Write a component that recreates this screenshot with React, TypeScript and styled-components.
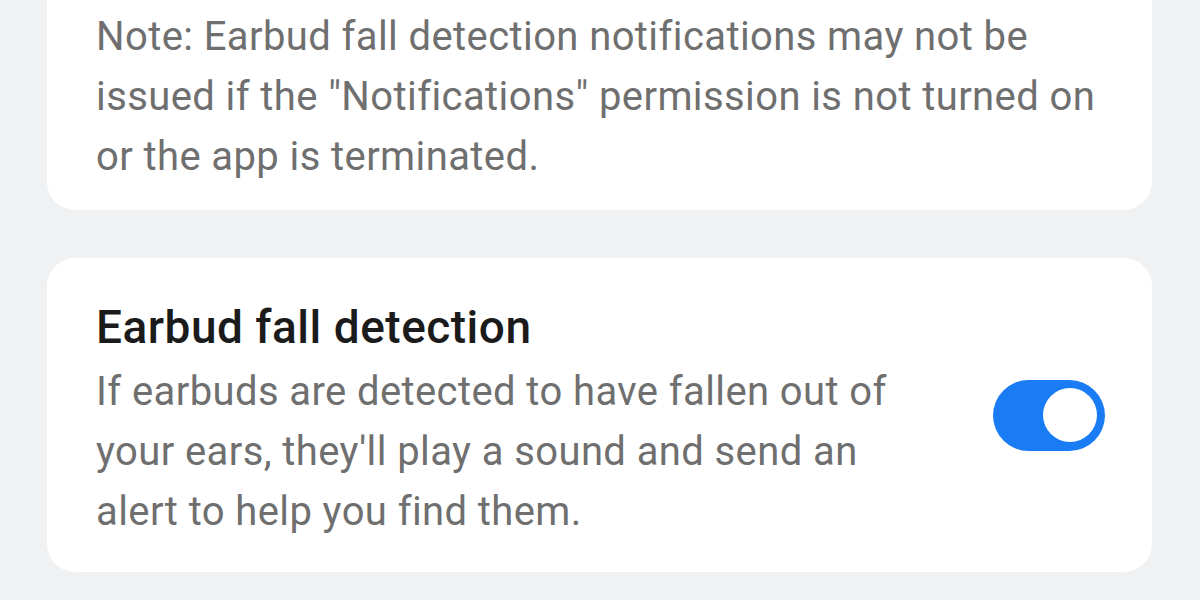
import styled, { createGlobalStyle } from "styled-components";

const GlobalStyle = createGlobalStyle`
  body {
    margin: 0;
    background-color: #f0f1f3;
    font-family: Roboto, "Noto Sans", sans-serif;
    overflow: hidden;
  }
`;

const Page = styled.div`
  display: flex;
  flex-direction: column;
  gap: 48px;
  padding: 0 48px 0 47px;
  height: 600px;
  box-sizing: border-box;
`;

const Card = styled.div<{ $first?: boolean }>`
  background-color: #ffffff;
  border-radius: 28px;
  margin-top: ${(p) => (p.$first ? "-40px" : "0")};
  padding: ${(p) => (p.$first ? "47px 36px 23px 49px" : "39px 47px 30px 49px")};
  display: flex;
  align-items: center;
  gap: 24px;
`;

const TextBlock = styled.div`
  flex: 1;
  min-width: 0;
`;

const Title = styled.div`
  font-size: 46px;
  font-weight: 500;
  letter-spacing: 0.5px;
  line-height: 60px;
  color: #1b1b1b;
  margin-bottom: 5px;
`;

const Body = styled.div<{ $narrow?: boolean }>`
  font-size: 40px;
  letter-spacing: 0.4px;
  line-height: 60px;
  color: #6f6f6f;
  max-width: ${(p) => (p.$narrow ? "830px" : "none")};
`;

const Toggle = styled.div<{ $on: boolean }>`
  width: 112px;
  height: 71px;
  border-radius: 36px;
  background-color: ${(p) => (p.$on ? "#1a7cf5" : "#b5b5b5")};
  display: flex;
  align-items: center;
  justify-content: ${(p) => (p.$on ? "flex-end" : "flex-start")};
  padding: 0 8px;
  margin-bottom: 9px;
  box-sizing: border-box;
  flex-shrink: 0;
`;

const Thumb = styled.div`
  width: 54px;
  height: 54px;
  border-radius: 50%;
  background-color: #ffffff;
`;

export default function App() {
  return (
    <>
      <GlobalStyle />
      <Page>
        <Card $first>
          <TextBlock>
            <Body>
              Note: Earbud fall detection notifications may not be issued if the
              "Notifications" permission is not turned on or the app is
              terminated.
            </Body>
          </TextBlock>
        </Card>
        <Card>
          <TextBlock>
            <Title>Earbud fall detection</Title>
            <Body $narrow>
              If earbuds are detected to have fallen out of your ears, they'll
              play a sound and send an alert to help you find them.
            </Body>
          </TextBlock>
          <Toggle $on>
            <Thumb />
          </Toggle>
        </Card>
      </Page>
    </>
  );
}
